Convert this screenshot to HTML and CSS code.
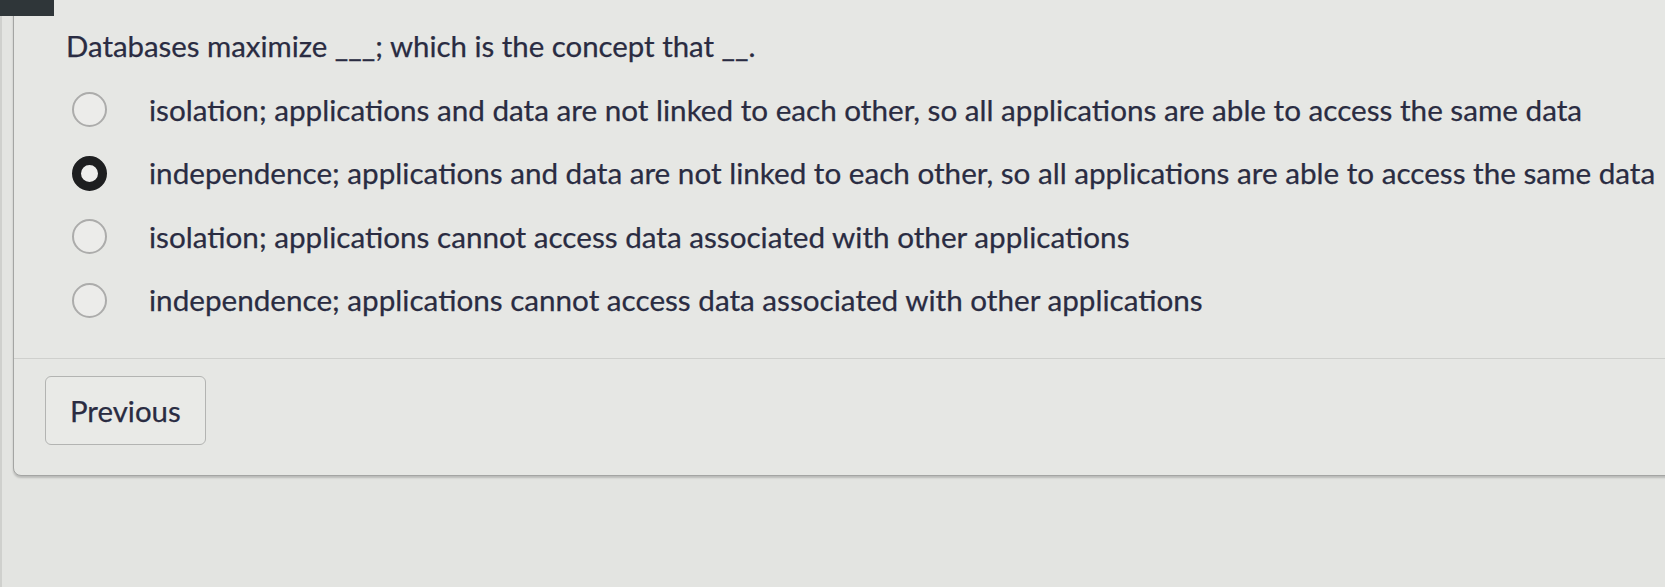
FILE: index.html
```html
<!DOCTYPE html>
<html lang="en">
<head>
<meta charset="utf-8">
<title>Quiz question</title>
<link rel="stylesheet" href="styles.css">
</head>
<body>
<div class="chip"></div>
<main class="card">
  <p class="question">Databases maximize ___; which is the concept that __.</p>
  <ul class="answers">
    <li class="answer"><span class="radio"></span><span class="label">isolation; applications and data are not linked to each other, so all applications are able to access the same data</span></li>
    <li class="answer"><span class="radio checked"></span><span class="label">independence; applications and data are not linked to each other, so all applications are able to access the same data</span></li>
    <li class="answer"><span class="radio"></span><span class="label">isolation; applications cannot access data associated with other applications</span></li>
    <li class="answer"><span class="radio"></span><span class="label">independence; applications cannot access data associated with other applications</span></li>
  </ul>
  <div class="footer">
    <button class="btn" type="button">Previous</button>
  </div>
</main>
</body>
</html>
```

FILE: styles.css
```css
html, body {
  margin: 0;
  padding: 0;
  height: 100%;
}
body {
  background: #e3e4e1;
  font-family: Lato, "Open Sans", "Liberation Sans", sans-serif;
  color: #2a2c42;
  overflow: hidden;
  border-left: 2px solid #cfd0cd;
  box-sizing: border-box;
  -webkit-text-stroke: 0.25px #2a2c42;
}
.chip {
  position: absolute;
  top: 0;
  left: 0;
  width: 54px;
  height: 16px;
  background: #2f3639;
}
.card {
  margin: -10px -30px 0 11px;
  padding: 0 0 30px 0;
  border: 1px solid #a4a5a3;
  border-radius: 0 0 8px 8px;
  background: #e6e7e4;
  box-shadow: 0 2px 2px rgba(0, 0, 0, 0.18);
}
.question {
  margin: 0;
  padding: 37px 0 0 52px;
  font-size: 29.4px;
  line-height: 36px;
}
.answers {
  list-style: none;
  margin: 14px 0 0 0;
  padding: 0 0 0 58px;
}
.answer {
  display: flex;
  align-items: center;
  height: 63.5px;
  font-size: 29.65px;
  line-height: 36px;
  white-space: nowrap;
}
.radio {
  flex: none;
  width: 35px;
  height: 35px;
  box-sizing: border-box;
  border: 2px solid #acacab;
  border-radius: 50%;
  background: #ececea;
  margin-right: 42px;
}
.radio.checked {
  border: 9px solid #1e1f20;
  background: #eeeeec;
}
.footer {
  margin-top: 26px;
  border-top: 1px solid #cfd0cd;
  padding: 17px 0 0 31px;
}
.btn {
  font-family: inherit;
  font-size: 29.4px;
  line-height: 36px;
  color: #2a2c42;
  background: #e9eae7;
  border: 1.5px solid #b3b4b2;
  border-radius: 6px;
  padding: 16px 24px 15px 24px;
  margin: 0;
}
```
